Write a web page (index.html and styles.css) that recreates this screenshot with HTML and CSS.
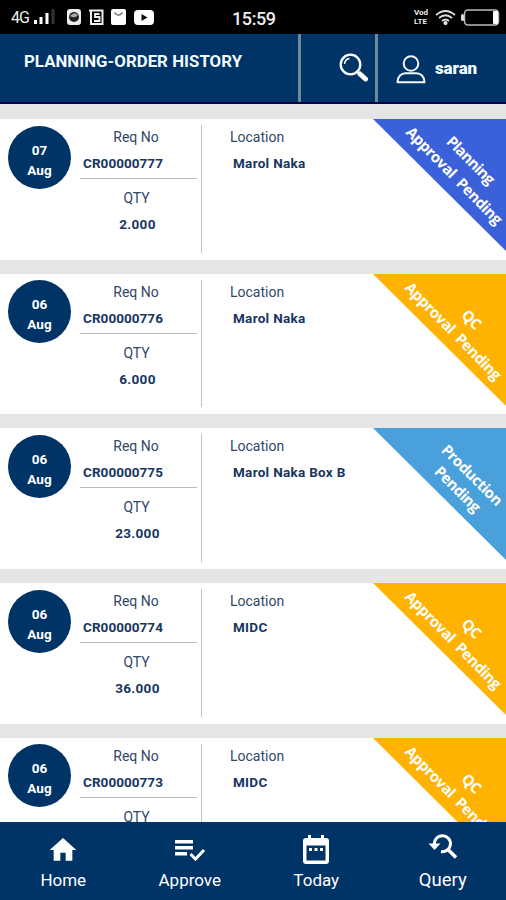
FILE: index.html
```html
<!DOCTYPE html>
<html lang="en">
<head>
<meta charset="utf-8">
<title>Planning-Order History</title>
<link rel="stylesheet" href="styles.css">
</head>
<body>
<div class="app">
  <div class="status">
    <div class="status-left">
      <span class="net">4G</span>
      <svg class="signal" width="21" height="16" viewBox="0 0 21 16"><path fill="#fff" d="M0 11h3v4H0zM5.500 8h3v7h-3zM11.500 4h3v11h-3z"/><path fill="#333" d="M17.500 0h3v15h-3z"/></svg>
      <svg class="app1" width="14" height="16" viewBox="0 0 14 16"><rect width="14" height="16" rx="3" fill="#eee"/><circle cx="7" cy="8" r="5" fill="#222"/><path d="M3 7q4-5 8-1-3 4-8 1" fill="#aaa"/></svg>
      <svg class="app2" width="15" height="16" viewBox="0 0 15 16"><path d="M0 1.500h13.500V15H2V1" fill="none" stroke="#eee" stroke-width="2"/><path d="M10.500 5H6v3h4.500v4H5" fill="none" stroke="#eee" stroke-width="1.800"/></svg>
      <svg class="app3" width="15" height="16" viewBox="0 0 15 16"><rect width="15" height="16" rx="2" fill="#fff"/><path d="M3.500 3.500Q7.500 9 11.500 3.500" fill="none" stroke="#777" stroke-width="1.300"/></svg>
      <svg class="app4" width="20" height="15" viewBox="0 0 20 15"><rect width="20" height="15" rx="4" fill="#fff"/><path d="M7.500 4l6 3.500-6 3.500z" fill="#111"/></svg>
    </div>
    <div class="clock">15:59</div>
    <div class="status-right">
      <div class="volte"><span>Vod</span><span>LTE</span></div>
      <svg width="21" height="15" viewBox="0 0 21 15" fill="none" stroke="#ddd" stroke-width="1.800"><path d="M1 5Q10.500-3 20 5M4 8q6.500-5.500 13 0M7 11q3.500-3 7 0"/><circle cx="10.500" cy="13" r="1.200" fill="#fff"/></svg>
      <svg width="39" height="17" viewBox="0 0 39 17"><rect x="3.500" y="1" width="34" height="15" rx="3.500" fill="none" stroke="#bbb" stroke-width="1.500"/><rect x="0" y="5" width="3" height="7" rx="1.500" fill="#ddd"/><rect x="32" y="2" width="5" height="13" rx="1" fill="#fff"/></svg>
    </div>
  </div>
  <header class="header">
    <h1>PLANNING-ORDER HISTORY</h1>
    <div class="search">
      <svg width="30" height="30" viewBox="0 0 30 30" fill="none" stroke="#fff"><circle cx="11.500" cy="11.500" r="9.800" stroke-width="2.300"/><path d="M5.500 11q.5-5 5-5.500" stroke-width="1.500"/><path d="M18.500 19l2 2" stroke-width="2"/><path d="M21 21l5.500 5" stroke-width="5" stroke-linecap="round"/></svg>
    </div>
    <div class="user">
      <svg width="30" height="29" viewBox="0 0 30 29" fill="none" stroke="#f4f8ff" stroke-width="2"><circle cx="15" cy="8.500" r="7.300"/><path d="M1.500 27.200c0-6 4-9 8-9h11c4 0 8 3 8 9z" stroke-linejoin="round"/></svg>
      <span>saran</span>
    </div>
  </header>
  <main class="list">
    <article class="card">
      <div class="date"><span>07</span><span>Aug</span></div>
      <div class="order"><div class="req"><span class="label">Req No</span><b class="code">CR00000777</b></div><div class="qty"><span class="label">QTY</span><b>2.000</b></div></div>
      <div class="place"><span class="label">Location</span><b>Marol Naka</b></div>
      <svg class="ribbon planning" viewBox="0 0 133 133"><path d="M0 0h133v132z"/><text transform="translate(72.500 23.500) rotate(45)" textLength="61">Planning</text><text transform="translate(32 14) rotate(45.500)" textLength="130">Approval&#160; Pending</text></svg>
    </article>
    <article class="card">
      <div class="date"><span>06</span><span>Aug</span></div>
      <div class="order"><div class="req"><span class="label">Req No</span><b class="code">CR00000776</b></div><div class="qty"><span class="label">QTY</span><b>6.000</b></div></div>
      <div class="place"><span class="label">Location</span><b>Marol Naka</b></div>
      <svg class="ribbon qc" viewBox="0 0 133 133"><path d="M0 0h133v132z"/><text transform="translate(87.500 42) rotate(45)" textLength="21">QC</text><text transform="translate(31 14.500) rotate(45.500)" textLength="130">Approval&#160; Pending</text></svg>
    </article>
    <article class="card">
      <div class="date"><span>06</span><span>Aug</span></div>
      <div class="order"><div class="req"><span class="label">Req No</span><b class="code">CR00000775</b></div><div class="qty"><span class="label">QTY</span><b>23.000</b></div></div>
      <div class="place"><span class="label">Location</span><b>Marol Naka Box B</b></div>
      <svg class="ribbon production" viewBox="0 0 133 133"><path d="M0 0h133v132z"/><text transform="translate(67.500 23) rotate(45)" textLength="79">Production</text><text transform="translate(60.500 44.500) rotate(45)" textLength="58">Pending</text></svg>
    </article>
    <article class="card">
      <div class="date"><span>06</span><span>Aug</span></div>
      <div class="order"><div class="req"><span class="label">Req No</span><b class="code">CR00000774</b></div><div class="qty"><span class="label">QTY</span><b>36.000</b></div></div>
      <div class="place"><span class="label">Location</span><b>MIDC</b></div>
      <svg class="ribbon qc" viewBox="0 0 133 133"><path d="M0 0h133v132z"/><text transform="translate(87.500 42) rotate(45)" textLength="21">QC</text><text transform="translate(31 14.500) rotate(45.500)" textLength="130">Approval&#160; Pending</text></svg>
    </article>
    <article class="card">
      <div class="date"><span>06</span><span>Aug</span></div>
      <div class="order"><div class="req"><span class="label">Req No</span><b class="code">CR00000773</b></div><div class="qty"><span class="label">QTY</span></div></div>
      <div class="place"><span class="label">Location</span><b>MIDC</b></div>
      <svg class="ribbon qc" viewBox="0 0 133 133"><path d="M0 0h133v132z"/><text transform="translate(87.500 42) rotate(45)" textLength="21">QC</text><text transform="translate(31 14.500) rotate(45.500)" textLength="130">Approval&#160; Pending</text></svg>
    </article>
  </main>
  <nav class="nav">
    <a class="tab"><svg width="32" height="32" viewBox="0 0 24 24"><path d="M10 20v-6h4v6h5v-8h3L12 3 2 12h3v8z"/></svg><span>Home</span></a>
    <a class="tab"><svg width="32" height="32" viewBox="0 0 32 32"><path d="M1 6h18v3.400H1zM1 12h18v3.400H1zM1 18h12v3.400H1z"/><path d="M16.500 20l5 5L30 16" fill="none" stroke="#fff" stroke-width="3"/></svg><span>Approve</span></a>
    <a class="tab"><svg width="32" height="32" viewBox="0 0 32 32"><path fill-rule="evenodd" d="M8 1h3v3h10V1h3v3h2q3 0 3 3v20q0 3-3 3H6q-3 0-3-3V7q0-3 3-3h2zM6.500 11.500V26.500h19V11.500z"/><path d="M9 14h3v3H9zM14.500 14h3v3h-3zM20 14h3v3h-3z"/></svg><span>Today</span></a>
    <a class="tab query"><svg width="32" height="32" viewBox="0 0 32 32"><path d="M7.500 13.500A8 8 0 1 1 14 20.500" fill="none" stroke="#fff" stroke-width="3"/><path d="M20.500 18l8.500 8.500" fill="none" stroke="#fff" stroke-width="3.500"/><path d="M1.500 12.500h12l-6 6.500z"/></svg><span>Query</span></a>
  </nav>
</div>
</body>
</html>
```

FILE: styles.css
```css
* { box-sizing: border-box; }
body { margin: 0; font-family: Roboto, "Liberation Sans", sans-serif; color: #17365f; }
.app { width: 506px; height: 900px; display: flex; flex-direction: column; overflow: hidden; background: #e5e5e5; }
.status { flex: none; height: 34px; background: #000; color: #eee; display: grid; grid-template-columns: 221px auto 1fr; align-items: center; padding: 0 6px 0 11px; }
.status svg { display: block; }
.status-left { display: flex; align-items: center; }
.net { font-size: 16px; letter-spacing: -1px; width: 23px; }
.app1 { margin-left: 12px; }
.app2 { margin-left: 8px; }
.app3 { margin-left: 7px; }
.app4 { margin-left: 8px; }
.clock { font-size: 18px; font-weight: 500; letter-spacing: -.4px; padding-top: 2px; }
.status-right { display: flex; justify-content: flex-end; align-items: center; gap: 5px; }
.volte { display: flex; flex-direction: column; font-size: 8px; line-height: 9px; font-weight: 700; width: 16px; }
.header { flex: none; height: 70px; display: grid; grid-template-columns: 298px 77px 1fr; background: #003366; border-bottom: 2px solid #000050; color: #f0fbff; }
.header h1 { margin: 0; padding: 17px 0 0 24px; font-size: 16.800px; line-height: 20px; letter-spacing: .05px; font-weight: 700; white-space: nowrap; }
.search, .user { border-left: 3px solid #71879a; display: flex; align-items: center; }
.search { padding-left: 38px; }
.user { padding-left: 18px; gap: 9px; font-size: 17px; font-weight: 900; letter-spacing: -.1px; }
.user svg { margin-top: 2px; }
.list { flex: 1; min-height: 0; overflow: hidden; padding-top: 15px; display: flex; flex-direction: column; gap: 14.200px; }
.card { position: relative; flex: none; height: 140.500px; background: #fff; display: grid; grid-template-columns: 63px 130px 1fr; padding: 6px 0 7px 8px; }
.date { width: 63px; height: 63px; margin-top: .5px; border-radius: 50%; background: #003366; color: #fff; display: flex; flex-direction: column; align-items: center; justify-content: center; padding-top: 5px; font-size: 13.500px; line-height: 20px; font-weight: 700; }
.order { padding: 0 4px 0 9px; display: flex; flex-direction: column; }
.req, .qty { display: flex; flex-direction: column; align-items: center; padding-right: 5px; }
.req { height: 54px; border-bottom: 1px solid #bbb; }
.qty { padding-top: 7px; padding-right: 4px; }
.qty b { padding-left: 2px; }
.label { font-size: 14px; line-height: 24px; color: #304768; }
.card b { font-size: 13.500px; line-height: 28px; font-weight: 700; letter-spacing: .3px; white-space: nowrap; }
.card .code { align-self: flex-start; padding-left: 3px; letter-spacing: .05px; }
.place { border-left: 1.500px solid #c4c4c4; padding-left: 28px; display: flex; flex-direction: column; }
.place b { padding-left: 3px; }
.ribbon { position: absolute; top: 0; right: 0; width: 133px; height: 133px; }
.ribbon text { fill: #fff; font-family: "Open Sans", "Noto Sans", sans-serif; font-size: 15px; font-weight: 700; }
.planning { fill: #3b61da; }
.qc { fill: #ffb300; }
.production { fill: #4aa0da; }
.nav { flex: none; height: 78px; background: #003366; display: grid; grid-template-columns: repeat(4, 1fr); color: #fff; }
.tab { display: flex; flex-direction: column; align-items: center; padding-top: 12px; font-size: 17px; letter-spacing: 0; }
.tab svg { display: block; fill: #fff; }
.tab span { line-height: 29px; }
.query { padding-top: 9px; font-size: 18.500px; }
.query span { line-height: 34px; }
```
